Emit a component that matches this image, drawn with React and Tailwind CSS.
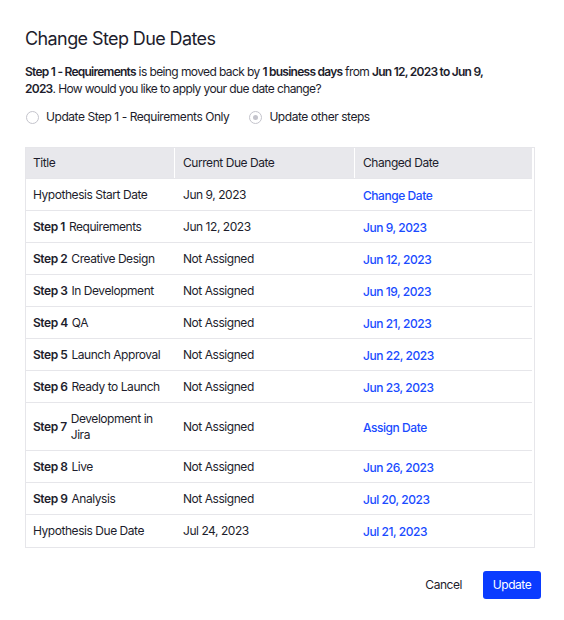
import React from 'react'

const rows = [
  { title: 'Hypothesis Start Date', current: 'Jun 9, 2023', changed: 'Change Date' },
  { step: 'Step 1', title: 'Requirements', current: 'Jun 12, 2023', changed: 'Jun 9, 2023' },
  { step: 'Step 2', title: 'Creative Design', current: 'Not Assigned', changed: 'Jun 12, 2023' },
  { step: 'Step 3', title: 'In Development', current: 'Not Assigned', changed: 'Jun 19, 2023' },
  { step: 'Step 4', title: 'QA', current: 'Not Assigned', changed: 'Jun 21, 2023' },
  { step: 'Step 5', title: 'Launch Approval', current: 'Not Assigned', changed: 'Jun 22, 2023' },
  { step: 'Step 6', title: 'Ready to Launch', current: 'Not Assigned', changed: 'Jun 23, 2023' },
  { step: 'Step 7', title: 'Development in Jira', current: 'Not Assigned', changed: 'Assign Date' },
  { step: 'Step 8', title: 'Live', current: 'Not Assigned', changed: 'Jun 26, 2023' },
  { step: 'Step 9', title: 'Analysis', current: 'Not Assigned', changed: 'Jul 20, 2023' },
  { title: 'Hypothesis Due Date', current: 'Jul 24, 2023', changed: 'Jul 21, 2023' },
]

const Radio = ({ checked, label }) => (
  <label className="flex items-center gap-[7px]">
    <span className="w-[13px] h-[13px] rounded-full border border-[#c4c4cc] flex items-center justify-center bg-white">
      {checked && <span className="w-[5px] h-[5px] rounded-full bg-[#c4c4cc]" />}
    </span>
    <span>{label}</span>
  </label>
)

const App = () => {
  return (
    <div
      className="w-[564px] h-[620px] bg-white text-[#1d1d2c] pt-[27px] px-[25px] tracking-[-0.45px]"
      style={{ fontFamily: 'Inter, "Noto Sans", sans-serif' }}
    >
      <h1 className="text-[18px] leading-[24px] font-normal tracking-[-0.6px]">Change Step Due Dates</h1>

      <p className="mt-[12px] max-w-[484px] text-[12px] leading-[17px] tracking-[-0.6px]">
        <b className="font-semibold tracking-[-0.75px]">Step 1 - Requirements</b> is being moved back by{' '}
        <b className="font-semibold tracking-[-0.75px]">1 business days</b> from{' '}
        <b className="font-semibold tracking-[-0.75px]">Jun 12, 2023 to Jun 9, 2023</b>. How would you like to apply your due date change?
      </p>

      <div className="mt-[11px] flex items-center gap-[20px] text-[12px] leading-[18px] pl-[1px]">
        <Radio label="Update Step 1 - Requirements Only" />
        <Radio checked label="Update other steps" />
      </div>

      {/* Table */}
      <div className="mt-[21px] w-[510px] border border-[#e6e6ea] text-[12px] leading-[16px]">
        <div className="grid grid-cols-[148px_180px_1fr] h-[31px] bg-[#e8e8ec] mr-[2px] border-b border-[#e6e6ea]">
          <div className="flex items-center px-[7px]">Title</div>
          <div className="flex items-center px-[8px] border-l border-white">Current Due Date</div>
          <div className="flex items-center px-[8px] border-l border-white">Changed Date</div>
        </div>
        {rows.map((r, i) => (
          <div
            key={i}
            className={`grid grid-cols-[148px_180px_1fr] mr-[2px] ${i < rows.length - 1 ? 'border-b border-[#e6e6ea]' : ''} ${r.step === 'Step 7' ? 'h-[48px]' : 'h-[32px]'}`}
          >
            <div className="flex items-center gap-[4px] px-[7px]">
              {r.step && <b className="font-semibold shrink-0">{r.step}</b>}
              <span className="leading-[16px]">{r.title}</span>
            </div>
            <div className="flex items-center px-[9px]">{r.current}</div>
            <div className="flex items-center px-[9px] pt-[2px] text-[#1a4bff] font-medium">{r.changed}</div>
          </div>
        ))}
      </div>

      <div className="mt-[23px] flex justify-end items-center gap-[21px] mr-[-2px] text-[12px]">
        <button className="text-[#1d1d2c]">Cancel</button>
        <button className="h-[28px] w-[58px] rounded-[3px] bg-[#0a3bff] text-white">Update</button>
      </div>
    </div>
  )
}

export default App
